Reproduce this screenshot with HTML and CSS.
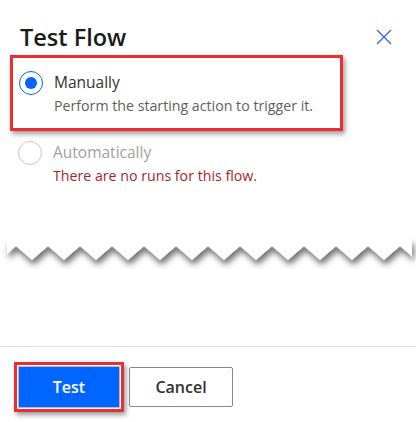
FILE: index.html
```html
<!DOCTYPE html>
<html lang="en">
<head>
<meta charset="utf-8">
<title>Test Flow</title>
<link rel="stylesheet" href="styles.css">
</head>
<body>
<div class="panel">
  <div class="header">
    <h1 class="title">Test Flow</h1>
    <button class="close" aria-label="Close">
      <svg width="16" height="16" viewBox="0 0 16 16"><path d="M1 1 L15 15 M15 1 L1 15" stroke="#2a62f0" stroke-width="1.3" fill="none"/></svg>
    </button>
  </div>
  <div class="options">
    <div class="option highlighted">
      <span class="radio checked"><span class="dot"></span></span>
      <div class="opt-text">
        <div class="label">Manually</div>
        <div class="desc">Perform the starting action to trigger it.</div>
      </div>
    </div>
    <div class="option disabled">
      <span class="radio"></span>
      <div class="opt-text">
        <div class="label">Automatically</div>
        <div class="desc error">There are no runs for this flow.</div>
      </div>
    </div>
  </div>
  <div class="tear">
    <svg width="416" height="40" viewBox="0 0 416 40">
      <defs>
        <filter id="sh" x="-10%" y="-50%" width="120%" height="200%">
          <feDropShadow dx="2" dy="5" stdDeviation="3" flood-color="#000" flood-opacity="0.55"/>
        </filter>
      </defs>
      <polygon filter="url(#sh)" fill="#fff" points="7,0 7,15 16,7 32,21 48,7 64,21 80,7 96,21 112,7 128,21 144,7 160,21 176,7 192,21 208,7 224,21 240,7 256,21 272,7 288,21 304,7 320,21 336,7 352,21 368,7 384,21 400,7 412,17.5 412,0"/>
    </svg>
  </div>
  <div class="spacer"></div>
  <div class="footer">
    <span class="focus-ring"><button class="btn primary">Test</button></span>
    <button class="btn secondary">Cancel</button>
  </div>
</div>
</body>
</html>
```

FILE: styles.css
```css
* { box-sizing: border-box; }
html, body { margin: 0; padding: 0; background: #fff; }
body { font-family: "Segoe UI", "Open Sans", sans-serif; color: #323130; }

.panel {
  width: 416px;
  height: 422px;
  display: flex;
  flex-direction: column;
  background: #fff;
}

.header {
  display: flex;
  justify-content: space-between;
  align-items: center;
  padding: 20px 24px 0 20px;
  height: 54px;
}
.title {
  margin: 0;
  font-size: 23.5px;
  font-weight: 600;
  color: #1b1a19;
  line-height: 32px;
}
.close {
  border: 0;
  background: transparent;
  padding: 0;
  width: 16px;
  height: 16px;
  display: flex;
}

.options {
  padding: 1px 0 0 10px;
  display: flex;
  flex-direction: column;
}
.option {
  display: flex;
  align-items: flex-start;
  gap: 11px;
  width: 333px;
  padding: 13px 6px 0 6px;
  border: 3px solid transparent;
}
.option.highlighted {
  height: 76px;
  border-color: #ec2d31;
  box-shadow: 2px 3px 5px rgba(0, 0, 0, 0.4);
}
.option.disabled {
  padding-top: 7px;
  margin-left: -1px;
}

.radio {
  flex: none;
  width: 24px;
  height: 24px;
  border-radius: 50%;
  border: 1.5px solid #c8c6c4;
  display: flex;
  align-items: center;
  justify-content: center;
}
.radio.checked { border-color: #0066ff; }
.dot {
  width: 12px;
  height: 12px;
  border-radius: 50%;
  background: #0066ff;
}

.opt-text { display: flex; flex-direction: column; }
.label {
  font-size: 15.5px;
  line-height: 23px;
  color: #323130;
}
.desc {
  font-size: 14.2px;
  line-height: 24px;
  color: #605e5c;
}
.disabled .label { color: #a19f9d; }
.desc.error { color: #a4262c; }

.tear {
  margin-top: 48px;
  height: 40px;
  display: flex;
}

.spacer { flex: 1; }

.footer {
  border-top: 1px solid #e1dfdd;
  height: 76px;
  padding: 15px 0 0 14px;
  display: flex;
  align-items: flex-start;
  gap: 5px;
}
.focus-ring {
  display: flex;
  border: 3px solid #ec2d31;
  padding: 1px;
  background: #fff;
  box-shadow: 2px 3px 5px rgba(0, 0, 0, 0.4);
}
.btn {
  height: 40px;
  border-radius: 2px;
  font-family: "Segoe UI", "Open Sans", sans-serif;
  font-size: 16px;
  font-weight: 600;
  padding: 0;
  cursor: pointer;
}
.btn.primary {
  width: 102px;
  height: 42px;
  border: 1px solid #b8b8b8;
  background: #0066ff;
  color: #fff;
  border-radius: 1px;
}
.btn.secondary {
  margin-top: 5px;
  width: 104px;
  border: 1px solid #8a8886;
  background: #fff;
  color: #323130;
}
```
